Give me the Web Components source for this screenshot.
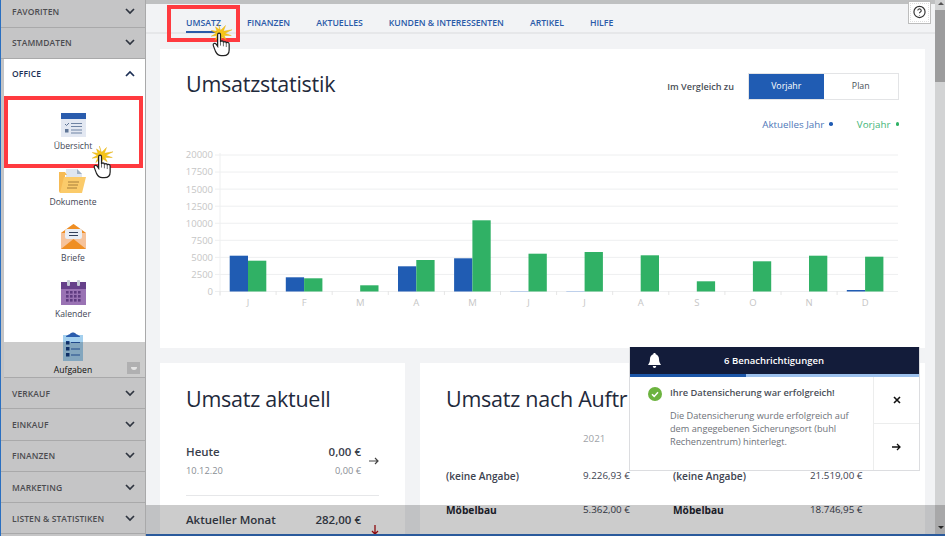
<!DOCTYPE html>
<html lang="de"><head><meta charset="utf-8"><title>Umsatz</title>
<style>html,body{margin:0;padding:0;background:#f2f3f5;font-family:"Open Sans","Noto Sans",sans-serif;}</style></head>
<body>
<app-shell>
  <side-nav slot="side"></side-nav>
  <main-view slot="main"></main-view>
</app-shell>
<script>
const HAND = `<svg viewBox="0 0 40 46" width="40" height="46" aria-hidden="true">
<path d="M13 0l3 9 7-7-3 8 12-2-10 5 9 3-10 0 3 6-6-4-2 6-2-6-6 5 3-7-8 1 7-4-7-4 8 1-2-6 6 4z" fill="#f5c518" stroke="#e0a800" stroke-width=".5"/>
<path d="M12 15c0-3 4-3 4 0v10c0-2 4-2 4 0v1c0-2 4-2 4 0v1c0-2 4-2 4 1v8c0 5-3 8-8 8h-3c-4 0-6-2-8-6l-3-8c-1-3 2-4 4-2l2 3z" fill="#fff" stroke="#222" stroke-width="1.7"/>
<path d="M16 25v5M20 26v5M24 27v5" stroke="#333" stroke-width="1" fill="none"/></svg>`;

class AppShell extends HTMLElement{
  constructor(){super();this.attachShadow({mode:'open'}).innerHTML=`<style>
  :host{display:grid;grid-template-columns:146px 1fr;width:945px;height:536px;overflow:hidden;position:relative;color:#2b3240}
  .dim{position:absolute;left:146px;right:0;top:505px;bottom:0;background:rgba(0,0,0,.2);border-bottom:2px solid #2a5a9c;pointer-events:none}
  </style><slot name="side"></slot><slot name="main"></slot><div class="dim"></div>`;}
}
class NavHead extends HTMLElement{
  constructor(){super();const open=this.hasAttribute('open');this.attachShadow({mode:'open'}).innerHTML=`<style>
  :host{display:flex;align-items:center;justify-content:space-between;height:31.3px;flex:none;box-sizing:border-box;padding:0 10px 0 11px;
    background:#c5c5c6;border-bottom:1px solid #a9a9aa;font:600 8.5px "Open Sans",sans-serif;color:#4c4c50;letter-spacing:.1px}
  :host([open]){background:#fff;border-bottom:0;color:#1c2f55}
  svg{width:10px;height:7px;fill:none;stroke:#2f3540;stroke-width:1.7}
  :host([open]) svg{stroke:#1c2f55}
  </style><span><slot></slot></span><svg viewBox="0 0 10 7"><path d="${open?'M1 6l4-4 4 4':'M1 1l4 4 4-4'}"/></svg>`;}
}
const ICONS={
 overview:`<svg viewBox="0 0 25 24" width="25" height="24"><rect y="0" width="25" height="24" fill="#e3e8f2"/><rect width="25" height="6" fill="#2a5cad"/><path d="M4 11l1.500 1.500L8 10" fill="none" stroke="#5f7596" stroke-width="1"/><rect x="4" y="16" width="3.500" height="3.500" fill="#5f7596"/><path d="M10 10.500h11M10 13.500h11M10 17h11M10 20h11" stroke="#6f83a3" stroke-width="1"/></svg>`,
 docs:`<svg viewBox="0 0 28 24" width="28" height="24"><path d="M7 8V0h11l5 5v9H7z" fill="#dfe6f0"/><path d="M18 0l5 5h-5z" fill="#9fb0c4"/><path d="M0 3h6l2 3-2 0v18H2a2 2 0 0 1-2-2z" fill="#f6bb55"/><path d="M5 8h22l-4 16H1z" fill="#fbcb6a"/><path d="M9 13h11M9 16h10M8 19h10" stroke="#a77f3a" stroke-width="1"/></svg>`,
 mail:`<svg viewBox="0 0 25 25" width="25" height="25"><path d="M0 9L12.500 0 25 9v16H0z" fill="#f6c39b"/><path d="M12.500 0L25 9H0z" fill="#ef8f24"/><path d="M0 25l12.500-10L25 25z" fill="#ef8f24"/><rect x="4" y="5" width="17" height="10" rx="2" fill="#e9eef6"/><path d="M8 8.500h9M8 11.500h9" stroke="#33415c" stroke-width="1.200"/></svg>`,
 cal:`<svg viewBox="0 0 25 25" width="25" height="25"><rect y="2" width="25" height="23" fill="#9a73b4"/><rect y="2" width="25" height="7" fill="#66418a"/><rect x="6" y="0" width="3" height="6" rx="1" fill="#c7ced9"/><rect x="16" y="0" width="3" height="6" rx="1" fill="#c7ced9"/><g fill="#5f3b80">${[0,1,2,3].map(c=>[0,1,2].map(r=>`<rect x="${5+c*4}" y="${11+r*4}" width="2.600" height="2.600"/>`).join('')).join('')}</g></svg>`,
 tasks:`<svg viewBox="0 0 20 29" width="20" height="29"><rect y="3" width="20" height="26" fill="#a4d0ee"/><path d="M3 5c0-2 3-2 4-3 1-2 5-2 6 0 1 1 4 1 4 3z" fill="#2a5cad"/><rect x="3" y="9" width="3.500" height="3.500" fill="#123a80"/><rect x="3" y="15" width="3.500" height="3.500" fill="#123a80"/><rect x="3" y="21" width="3.500" height="3.500" fill="#123a80"/><path d="M8 10.500h9M8 17h9M8 23h9" stroke="#2a5cad" stroke-width="1.200"/></svg>`
};
class NavTile extends HTMLElement{
  constructor(){super();this.attachShadow({mode:'open'}).innerHTML=`<style>
  :host{display:flex;flex-direction:column;align-items:center;justify-content:flex-end;height:56px;flex:none;box-sizing:border-box;
   font:400 8.6px "Open Sans",sans-serif;color:#3f4654;gap:3px}
  :host([strong]){color:#111}
  svg{display:block}
  </style>${ICONS[this.getAttribute('icon')]}<span><slot></slot></span>`;}
}
class SideNav extends HTMLElement{
  constructor(){super();this.attachShadow({mode:'open'}).innerHTML=`<style>
  :host{display:flex;flex-direction:column;height:536px;box-sizing:border-box;border-left:1px solid #2a6fc0;border-right:1px solid #a9a9aa;background:#c5c5c6;position:relative;overflow:hidden}
  .first{margin-top:-3.600px}
  .panel{height:319px;flex:none;background:#fff;margin-left:3px;position:relative;overflow:hidden;display:flex;flex-direction:column}
  .panel nav-head{padding-left:8px;height:29px}
  .tiles{padding-top:8px;display:flex;flex-direction:column;margin-left:-3px}
  .cap{position:absolute;left:-3px;right:0;bottom:0;height:36px;background:rgba(0,0,0,.2);border-bottom:1px solid #a9a9aa;box-sizing:border-box}
  .btn{position:absolute;right:5px;top:20px;width:13px;height:12px;background:#b0b0b1;display:flex;align-items:center;justify-content:center}
  .btn i{display:block;width:6px;height:3px;background:#e4e4e4;border-radius:0 0 3px 3px}
  .mark{position:absolute;left:3px;top:96px;width:139px;height:72px;box-sizing:border-box;border:4px solid #ff3a3f;pointer-events:none}
  .hand{position:absolute;left:89px;top:146px;transform:scale(.72);transform-origin:0 0}
  </style>
  <nav-head class="first">FAVORITEN</nav-head><nav-head>STAMMDATEN</nav-head>
  <div class="panel"><nav-head open>OFFICE</nav-head>
   <div class="tiles"><nav-tile icon="overview">Übersicht</nav-tile><nav-tile icon="docs">Dokumente</nav-tile><nav-tile icon="mail">Briefe</nav-tile><nav-tile icon="cal">Kalender</nav-tile><nav-tile icon="tasks" strong>Aufgaben</nav-tile></div>
   <div class="cap"><div class="btn"><i></i></div></div>
  </div>
  <nav-head>VERKAUF</nav-head><nav-head>EINKAUF</nav-head><nav-head>FINANZEN</nav-head><nav-head>MARKETING</nav-head><nav-head>LISTEN &amp; STATISTIKEN</nav-head>
  <div class="mark"></div><div class="hand">${HAND}</div>`;}
}
class TabBar extends HTMLElement{
  constructor(){super();this.attachShadow({mode:'open'}).innerHTML=`<style>
  :host{display:flex;height:30px;box-sizing:border-box;padding-left:40px;gap:26px;border-bottom:2px solid #e6e7e9;font:600 8.7px "Open Sans",sans-serif;color:#2a5aa8;position:relative;align-items:stretch}
  span{display:flex;align-items:center;padding-top:10px;box-sizing:border-box;position:relative}
  span.on::after{content:"";position:absolute;left:0;right:0;bottom:-1px;height:2px;background:#2a5aa8}
  .help{position:absolute;left:762px;top:-3px;width:23px;height:23px;box-sizing:border-box;border:1px solid #bdbdbd;outline:1px dotted #ddd;outline-offset:-3px;background:#fff;display:flex;align-items:center;justify-content:center}
  .help svg{width:15px;height:15px}
  .mark{position:absolute;left:21px;top:1px;width:73px;height:37px;box-sizing:border-box;border:4px solid #ff3a3f;z-index:3}
  .hand{position:absolute;left:63px;top:20px;transform:scale(.72);transform-origin:0 0;z-index:4}
  </style><span class="on">UMSATZ</span><span>FINANZEN</span><span>AKTUELLES</span><span>KUNDEN &amp; INTERESSENTEN</span><span>ARTIKEL</span><span>HILFE</span>
  <div class="help"><svg viewBox="0 0 14 14"><circle cx="7" cy="6.500" r="5.200" fill="none" stroke="#333" stroke-width="1.100"/><path d="M5.400 5.200a1.600 1.600 0 1 1 2.400 1.400c-.6.300-.8.600-.8 1.200M7 9.300v.6" fill="none" stroke="#333" stroke-width="1"/></svg></div>
  <div class="mark"></div><div class="hand">${HAND}</div>`;}
}
const DATA=[[255.7,260.7],[277.3,278.3],[0,285.3],[266.3,260],[258.3,220.3],[291,253.7],[291,252],[0,255.3],[0,281.3],[0,261.3],[0,255.7],[290,256.7]];
class BarChart extends HTMLElement{
  constructor(){super();
   const ox=160,oy=145;
   const X=x=>x-ox, Y=y=>y-oy, base=291.5;
   let s='';
   [20000,17500,15000,12500,10000,7500,5000,2500,0].forEach((l,i)=>{const y=155+i*17.06;
     s+=`<line x1="${X(215)}" x2="${X(898)}" y1="${Y(y)}" y2="${Y(y)}" stroke="#eeeff0" stroke-width="1"/>`;
     s+=`<text x="${X(213)}" y="${Y(y)+3.4}" text-anchor="end" font-size="9.500" fill="#c6c6c6">${l}</text>`;});
   s+=`<line x1="${X(220)}" x2="${X(220)}" y1="${Y(153)}" y2="${Y(296)}" stroke="#eeeff0"/>`;
   'JFMAMJJASOND'.split('').forEach((m,i)=>{
     const bx=220+i*56.1;
     s+=`<line x1="${X(bx)}" x2="${X(bx)}" y1="${Y(291)}" y2="${Y(295)}" stroke="#e6e6e6"/>`;
     s+=`<text x="${X(bx+28)}" y="${Y(306)}" text-anchor="middle" font-size="9.500" fill="#c6c6c6">${m}</text>`;
     const [b,g]=DATA[i];
     const cx=bx+28;
     if(b){const thin=b===291;s+=`<rect x="${X(cx-18.3)}" y="${Y(b)}" width="18.300" height="${base-b}" fill="${thin?'#8fb0e6':'#205cb3'}"/>`;}
     s+=`<rect x="${X(cx)}" y="${Y(g)}" width="18.300" height="${base-g}" fill="#30b165"/>`;
   });
   this.attachShadow({mode:'open'}).innerHTML=`<style>:host{display:block;height:170px}svg{display:block;font-family:"Open Sans",sans-serif}</style>
   <svg width="765" height="170" viewBox="0 0 765 170">${s}</svg>`;}
}
const H2=`font:400 21.5px/30px "Open Sans",sans-serif;letter-spacing:-.26px;color:#1f2a3c`;
class StatCard extends HTMLElement{
  constructor(){super();this.attachShadow({mode:'open'}).innerHTML=`<style>
  :host{display:block;background:#fff;width:765px;height:299px;box-sizing:border-box;position:relative;flex:none}
  .top{display:flex;align-items:center;justify-content:space-between;padding:23px 26px 0 26px;height:51px;box-sizing:border-box}
  h2{margin:0 0 4px;${H2}}
  .cmp{display:flex;align-items:center;font:400 9px "Open Sans",sans-serif;color:#4a4f58}
  .cmp b{font-weight:600;margin-right:14px;font-size:9.100px}
  .seg{display:flex;width:151px;height:27px;box-sizing:border-box;border:1px solid #e3e4e6;font-size:8.800px}
  .seg span{flex:1;display:flex;align-items:center;justify-content:center}
  .seg .on{background:#205cb3;color:#fff}
  .leg{display:flex;justify-content:flex-end;gap:24px;padding:18px 26px 0;font:400 9.800px "Open Sans",sans-serif;height:30px;box-sizing:border-box;align-items:center}
  .leg span{color:#4e77b8;display:flex;align-items:center;gap:5px}
  .leg span+span{color:#41b577}
  .leg i{width:3.500px;height:3.500px;border-radius:50%;background:#205cb3}
  .leg span+span i{background:#30b165}
  bar-chart{margin-top:15px}
  </style>
  <div class="top"><h2>Umsatzstatistik</h2><div class="cmp"><b>Im Vergleich zu</b><div class="seg"><span class="on">Vorjahr</span><span>Plan</span></div></div></div>
  <div class="leg"><span>Aktuelles Jahr <i></i></span><span>Vorjahr <i></i></span></div>
  <bar-chart></bar-chart>`;}
}
class NowCard extends HTMLElement{
  constructor(){super();this.attachShadow({mode:'open'}).innerHTML=`<style>
  :host{display:block;background:#fff;width:245px;height:200px;box-sizing:border-box;padding:21px 26px 0;flex:none;font-family:"Open Sans",sans-serif}
  h2{margin:0 0 31px;${H2}}
  .r{display:grid;grid-template-columns:1fr auto 18px;align-items:center;row-gap:6px;font:600 11.500px/14px "Open Sans",sans-serif;color:#39404c}
  .r small{font:400 9.300px/12px "Open Sans",sans-serif;color:#8a8f96}
  .r small+small{text-align:right}
  .a{grid-row:1/3;grid-column:3;justify-self:end}
  hr{border:0;border-top:1px solid #e6e7e9;margin:18px 0 17px}
  svg{display:block}
  </style><h2>Umsatz aktuell</h2>
  <div class="r"><span>Heute</span><span>0,00 €</span><svg class="a" width="10" height="8" viewBox="0 0 10 8"><path d="M0 4h9M6 1l3 3-3 3" fill="none" stroke="#444" stroke-width="1.200"/></svg><small>10.12.20</small><small>0,00 €</small></div>
  <hr>
  <div class="r"><span>Aktueller Monat</span><span>282,00 €</span><svg class="a" width="8" height="10" viewBox="0 0 8 10" style="margin-top:12px"><path d="M4 0v9M1 6l3 3 3-3" fill="none" stroke="#b00d12" stroke-width="1.300"/></svg></div>`;}
}
class OrderCard extends HTMLElement{
  constructor(){super();this.attachShadow({mode:'open'}).innerHTML=`<style>
  :host{display:block;background:#fff;width:505px;height:200px;box-sizing:border-box;padding:21px 26px 0;flex:none;font-family:"Open Sans",sans-serif}
  h2{margin:0 0 18px;${H2};white-space:nowrap}
  .g{display:grid;grid-template-columns:137px 90px 137px 80px;font:400 9.800px/14px "Open Sans",sans-serif;color:#3d4350;row-gap:20px}
  .y{color:#a0a3a8;height:17px}
  .n{font-weight:600;font-size:10.200px}
  .m{font-weight:700;font-size:10.200px;color:#1f2530}
  </style><h2>Umsatz nach Auftr</h2>
  <div class="g"><span></span><span class="y">2021</span><span></span><span></span>
  <span class="n">(keine Angabe)</span><span>9.226,93 €</span><span class="n">(keine Angabe)</span><span>21.519,00 €</span>
  <span class="m">Möbelbau</span><span>5.362,00 €</span><span class="m">Möbelbau</span><span>18.746,95 €</span></div>`;}
}
class NoticeBox extends HTMLElement{
  constructor(){super();this.attachShadow({mode:'open'}).innerHTML=`<style>
  :host{position:absolute;left:483px;top:347px;width:291px;height:124px;display:flex;flex-direction:column;background:#fff;border:1px solid #dcdde0;border-top:0;box-sizing:border-box;z-index:5;font-family:"Open Sans",sans-serif}
  .h{height:27px;flex:none;background:#131c3a;color:#fff;display:flex;align-items:center;justify-content:center;font:600 9.500px "Open Sans",sans-serif;position:relative;padding-right:1px}
  .h svg{position:absolute;left:17px;top:6px}
  .p{height:3px;flex:none;background:linear-gradient(90deg,#1c56a8 0 116px,#9cc0ec 116px)}
  .b{flex:1;display:flex;min-height:0}
  .t{flex:1;padding:9px 0 0 18px;display:flex;gap:8px;min-width:0}
  .t svg{flex:none;margin-top:1px}
  .t b{display:block;font:600 9.300px/13px "Open Sans",sans-serif;color:#4a4f58;margin-bottom:10px}
  .t p{margin:0;font:400 9.200px/13px "Open Sans",sans-serif;color:#6e7279;white-space:nowrap}
  .s{width:45px;flex:none;border-left:1px solid #eceded;display:flex;flex-direction:column}
  .s div{flex:1;display:flex;align-items:center;justify-content:center}
  .s div+div{border-top:1px solid #eceded}
  </style>
  <div class="h"><svg width="15" height="15" viewBox="0 0 15 15"><path d="M7.500 0c.8 0 1.200.5 1.200 1.200C11 2 12 4 12 6c0 3 1 4.500 2 6H1c1-1.500 2-3 2-6 0-2 1-4 3.300-4.800C6.300.5 6.700 0 7.500 0zM5.800 13h3.400c0 1-.8 2-1.700 2s-1.700-1-1.700-2z" fill="#fff"/></svg>6 Benachrichtigungen</div>
  <div class="p"></div>
  <div class="b"><div class="t"><svg width="14" height="14" viewBox="0 0 14 14"><circle cx="7" cy="7" r="7" fill="#6cb33f"/><path d="M4 7.200l2.200 2.200L10 5.300" fill="none" stroke="#fff" stroke-width="1.500"/></svg>
  <div><b>Ihre Datensicherung war erfolgreich!</b><p>Die Datensicherung wurde erfolgreich auf<br>dem angegebenen Sicherungsort (buhl<br>Rechenzentrum) hinterlegt.</p></div></div>
  <div class="s"><div><svg width="8" height="8" viewBox="0 0 8 8"><path d="M1 1l6 6M7 1l-6 6" stroke="#111" stroke-width="1.600"/></svg></div><div><svg width="9" height="8" viewBox="0 0 9 8"><path d="M0 4h8M5 1l3 3-3 3" fill="none" stroke="#111" stroke-width="1.300"/></svg></div></div></div>`;}
}
class MainView extends HTMLElement{
  constructor(){super();this.attachShadow({mode:'open'}).innerHTML=`<style>
  :host{display:grid;grid-template-columns:1fr 10px;height:536px;overflow:hidden;background:#f2f3f5;position:relative}
  .wrap{display:flex;flex-direction:column;min-width:0;overflow:hidden}
  .strip{height:4px;background:#bfc0c1;flex:none}
  tab-bar{flex:none}
  .cards{padding:15px 0 0 14px;display:flex;flex-direction:column;gap:15px}
  .row{display:flex;gap:15px}
  .sb{background:#d2d3d4;position:relative;display:flex;flex-direction:column;padding-top:10px}
  .sb i{display:block;width:10px;height:72px;background:#9c9c9d}
  .sb u{position:absolute;left:3px;bottom:7px;border:3px solid transparent;border-top:3px solid #333;border-bottom:0}
  .sb s{position:absolute;left:3px;top:2px;border:3px solid transparent;border-bottom:3px solid #555;border-top:0}
  </style>
  <div class="wrap"><div class="strip"></div><tab-bar></tab-bar>
   <div class="cards"><stat-card></stat-card><div class="row"><now-card></now-card><order-card></order-card></div></div></div>
  <div class="sb"><s></s><i></i><u></u></div><notice-box></notice-box>`;}
}
[['nav-head',NavHead],['nav-tile',NavTile],['side-nav',SideNav],['tab-bar',TabBar],['bar-chart',BarChart],['stat-card',StatCard],['now-card',NowCard],['order-card',OrderCard],['notice-box',NoticeBox],['main-view',MainView],['app-shell',AppShell]].forEach(([n,c])=>customElements.define(n,c));
</script>
</body></html>
